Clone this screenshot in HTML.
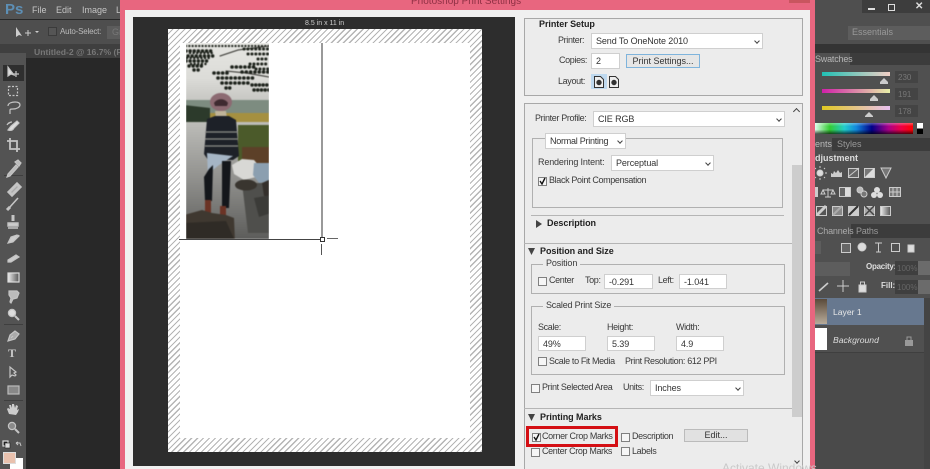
<!DOCTYPE html>
<html><head><meta charset="utf-8"><style>
html,body{margin:0;padding:0;background:#282828}
#r{position:relative;width:930px;height:469px;overflow:hidden;background:#282828;font-family:"Liberation Sans",sans-serif;font-size:9px;color:#222}
#r div,#r span{position:absolute;box-sizing:border-box;white-space:nowrap}
.t{font-size:9px;color:#3a3a3a;line-height:11px;letter-spacing:-.35px}
.b{font-weight:bold;color:#222;letter-spacing:-.05px}
.i{background:#fff;border:1px solid #cfcfcf;padding-left:4px;line-height:15px;color:#333;letter-spacing:-.1px}
.c{width:9px;height:9px;background:#f6f6f6;border:1px solid #808080}
.g{border:1px solid #b0b0b0}
.v{width:4px;height:4px;border-right:1.2px solid #444;border-bottom:1.2px solid #444;transform:rotate(45deg)}
.u{width:5px;height:5px;border-left:1.2px solid #444;border-top:1.2px solid #444;transform:rotate(45deg)}
.pt{color:#b5b5b5;font-size:9px;line-height:11px}
</style></head><body><div id="r">
<!-- PS chrome left -->
<div style="left:0;top:0;width:120px;height:19px;background:#535353"></div>
<div style="left:5px;top:2px;font:bold 15px 'Liberation Sans';color:#5d8fb5;line-height:15px">Ps</div>
<div class="pt" style="left:32px;top:5px;color:#c4c4c4">File</div>
<div class="pt" style="left:56px;top:5px;color:#c4c4c4">Edit</div>
<div class="pt" style="left:82px;top:5px;color:#c4c4c4">Image</div>
<div class="pt" style="left:116px;top:5px;color:#c4c4c4">L</div>
<div style="left:0;top:20px;width:120px;height:24px;background:#4e4e4e"></div>
<svg style="position:absolute;left:15px;top:26px" width="24" height="12"><path d="M1 1v10l3-2 3 1z" fill="#ccc"/><path d="M10 7h6M13 4v6" stroke="#ccc"/><path d="M20 5h4l-2 2z" fill="#ccc"/></svg>
<div style="left:48px;top:27px;width:9px;height:9px;background:#555;border:1px solid #3b3b3b"></div>
<div class="pt" style="left:60px;top:26px;color:#bbb;font-size:8px;letter-spacing:-.2px">Auto-Select:</div>
<div style="left:107px;top:26px;width:13px;height:13px;background:#5c5c5c"></div>
<div class="pt" style="left:112px;top:27px;color:#777">Gr</div>
<div style="left:0;top:44px;width:120px;height:14px;background:#3f3f3f"></div>
<div class="pt" style="left:34px;top:47px;color:#777;font-weight:bold;font-size:8.6px">Untitled-2 @ 16.7% (RGI</div>
<div style="left:0;top:53px;width:26px;height:416px;background:#535353"></div>
<div style="left:3px;top:65px;width:21px;height:16px;background:#2f2f2f"></div>
<div style="left:4px;top:175px;width:19px;height:1px;background:#3f3f3f"></div>
<div style="left:4px;top:324px;width:19px;height:1px;background:#3f3f3f"></div>
<div style="left:4px;top:400px;width:19px;height:1px;background:#3f3f3f"></div>
<svg style="position:absolute;left:0;top:60px" width="26" height="409" fill="none" stroke="#c4c4c4" stroke-width="1.2">
<path d="M8 7v9l3-2 3 1z" fill="#ddd"/><path d="M13 14h6M16 11v6"/>
<rect x="8.5" y="26.5" width="9" height="9" stroke-dasharray="2 1.5"/>
<path d="M8 46c0-3 4-4 7-4s5 1 5 3-3 4-7 4c-2 0-3 0-3 1s0 3 0 4"/>
<path d="M7 65c1-2 3-3 5-3M8 70c3 1 5 0 6-2l5-5-2-2-6 5z" fill="#ddd"/>
<path d="M10 78v11h10M7 81h10v11" stroke-width="1.8"/>
<path d="M8 114l8-9 2 2-8 9-3 1zM15 102l3-2 3 3-2 3z" fill="#bbb"/>
<path d="M9 132l8-8 3 3-8 8z" fill="#aaa" stroke-width="3"/>
<path d="M9 148l9-10" stroke-width="1.6"/><path d="M7 150l3-3" stroke-width="3"/>
<path d="M13 155v6" stroke-width="3"/><path d="M8 163h10v3H8zM8 168h10" fill="#ccc" stroke-width="1.4"/>
<path d="M8 183l5-1 6-6-2-1-6 2z" fill="#ccc"/><path d="M16 178l3-3"/>
<path d="M8 200l8-5 3 2-8 5H8z" fill="#ccc"/>
<defs><linearGradient id="gr"><stop offset="0" stop-color="#eee"/><stop offset="1" stop-color="#555"/></linearGradient></defs>
<rect x="8" y="213" width="11" height="9" fill="url(#gr)" stroke="#ddd"/>
<path d="M9 231h8l2 2-2 5-4 1-2 4-1-1 1-4-2-3z" fill="#bbb"/>
<circle cx="12" cy="253" r="3.6" fill="#ddd"/><path d="M15 256l4 4" stroke-width="2"/>
<path d="M8 281l2-6 5-4 4 3-4 5zM11 278l2-2" fill="#aaa"/>
<path d="M10 307v10l2-2 3 1 1-1-2-2 2-1z" fill="#555"/>
<rect x="8" y="326" width="11" height="8" fill="#888" stroke="#bbb"/>
<path d="M9 354l-2-5 1-1 2 1-1-4 2 0 1 3 0-4 2 0 1 4 1-3 2 1-1 4 2-1-1 3-2 3z" fill="#ccc" stroke="none"/>
<circle cx="12" cy="366" r="3.6" fill="#8a8a8a"/><path d="M15 369l4 4" stroke-width="2"/>
<rect x="3" y="381" width="5" height="5" fill="#222" stroke="#ddd"/><rect x="5" y="383" width="5" height="5" fill="#ddd" stroke="#222" stroke-width=".6"/>
<path d="M16 383h4l1 3M16 383l2-1M16 383l2 2" stroke-width="1"/>
</svg>
<div style="left:10px;top:458px;width:13px;height:11px;background:#fff"></div>
<div style="left:3px;top:452px;width:13px;height:12px;background:#e9c1ae;border:1px solid #ddd"></div>
<div style="left:8px;top:346px;font:bold 12px 'Liberation Serif';line-height:14px;color:#c8c8c8">T</div>
<!-- PS chrome right -->
<div style="left:815px;top:0;width:115px;height:469px;background:#505050"></div>
<div style="left:815px;top:0;width:115px;height:44px;background:#4f4f4f"></div>
<div style="left:862px;top:0;width:68px;height:13px;background:#3d3d3d"></div>
<div style="left:868px;top:8px;width:7px;height:2px;background:#ddd"></div>
<div style="left:888px;top:4px;width:7px;height:7px;border:1px solid #ddd"></div>
<div class="pt" style="left:915px;top:1px;color:#ddd;font-weight:bold;font-size:10px">✕</div>
<div style="left:848px;top:26px;width:82px;height:14px;background:#5d5d5d"></div>
<div class="pt" style="left:852px;top:27px;color:#999">Essentials</div>
<div style="left:815px;top:44px;width:115px;height:9px;background:#343434"></div>
<div style="left:815px;top:53px;width:115px;height:12px;background:#3c3c3c"></div>
<div style="left:815px;top:53px;width:35px;height:12px;background:#505050"></div>
<div class="pt" style="left:815px;top:54px;color:#b5b5b5;letter-spacing:-.2px">Swatches</div>
<div style="left:822px;top:72px;width:68px;height:4px;background:linear-gradient(90deg,#1fc0b4,#f2cfc5)"></div>
<div style="left:822px;top:89px;width:68px;height:4px;background:linear-gradient(90deg,#d01fa8,#e8f0a8)"></div>
<div style="left:822px;top:106px;width:68px;height:4px;background:linear-gradient(90deg,#e0c820,#e8c0f0)"></div>
<svg style="position:absolute;left:815px;top:76px" width="80" height="42" fill="#ccc"><path d="M65 6l4-4 4 4v2h-8zM55 23l4-4 4 4v2h-8zM50 40l4-4 4 4v1h-8z"/></svg>
<div style="left:895px;top:71px;width:23px;height:12px;background:#444"></div>
<div style="left:895px;top:88px;width:23px;height:12px;background:#444"></div>
<div style="left:895px;top:105px;width:23px;height:12px;background:#444"></div>
<div class="pt" style="left:898px;top:72px;color:#777;font-size:8px">230</div>
<div class="pt" style="left:898px;top:89px;color:#777;font-size:8px">191</div>
<div class="pt" style="left:898px;top:106px;color:#777;font-size:8px">178</div>
<div style="left:815px;top:123px;width:98px;height:11px;background:linear-gradient(90deg,#dfe,#3c3 15%,#2cc 30%,#18d 42%,#008 58%,#a08 75%,#e04 88%,#f00)"></div>
<div style="left:815px;top:123px;width:98px;height:11px;background:linear-gradient(#fff5,#fff0 30%,#0000 60%,#000a)"></div>
<div style="left:917px;top:123px;width:6px;height:11px;background:linear-gradient(#fff 50%,#000 50%)"></div>
<div style="left:815px;top:138px;width:115px;height:13px;background:#3c3c3c"></div>
<div style="left:815px;top:138px;width:17px;height:13px;background:#505050"></div>
<div class="pt" style="left:815px;top:139px;color:#bbb">ents</div>
<div class="pt" style="left:837px;top:139px;color:#999">Styles</div>
<div class="pt" style="left:815px;top:153px;color:#ddd;font-weight:bold">djustment</div>
<svg style="position:absolute;left:815px;top:165px" width="90" height="55" fill="#999" stroke="#ccc">
<circle cx="5" cy="8" r="3" fill="#ddd"/><path d="M5 1v2M5 13v2M-2 8h2M10 8h2M0 3l1 1M10 13l-1-1M10 3l-1 1M0 13l1-1"/>
<path d="M16 12V8l2 1 1-3 2 2 2-3 2 3 2-1v5z" fill="#ccc" stroke="none"/>
<rect x="33.500" y="3.500" width="10" height="9" fill="#666"/><path d="M33 12l11-9" />
<rect x="49.500" y="3.500" width="10" height="9" fill="#777"/><path d="M50 12l9-9L59 12z" fill="#ddd" stroke="none"/>
<path d="M66 3h10l-5 10z" fill="#777"/>
<rect x="0" y="22" width="3" height="10" fill="#ccc" stroke="none"/>
<path d="M13 23v9M8 25h10M8 25l-2 4h4zM18 25l-2 4h4zM10 32h6" fill="none"/>
<rect x="24.500" y="22.500" width="11" height="9" fill="#666"/><rect x="30" y="23" width="5" height="8" fill="#ddd" stroke="none"/>
<circle cx="45" cy="25" r="3" fill="#bbb"/><circle cx="49" cy="29" r="3" fill="#777"/>
<circle cx="62" cy="25" r="3" fill="#ddd" stroke="none"/><circle cx="59" cy="30" r="3" fill="#ddd" stroke="none"/><circle cx="65" cy="30" r="3" fill="#ddd" stroke="none"/>
<path d="M74.500 22.500h11v9h-11zM78 22v10M82 22v10M74 27h11" fill="#777"/>
<rect x="1.500" y="41.500" width="10" height="9" fill="#555"/><path d="M2 50l9-9" stroke-width="3" stroke="#ccc"/>
<rect x="17.500" y="41.500" width="10" height="9" fill="#888"/><path d="M18 50l9-9" stroke="#aaa" stroke-width="2"/>
<rect x="33.500" y="41.500" width="10" height="9" fill="#ccc"/><path d="M34 50l9-9" stroke="#333" stroke-width="2"/>
<rect x="49.500" y="41.500" width="10" height="9" fill="#aaa"/><path d="M50 41l9 9M59 41l-9 9" stroke="#444" stroke-width="1.5"/>
<rect x="65.500" y="41.500" width="10" height="9" fill="url(#gr)"/>
</svg>
<div style="left:815px;top:224px;width:115px;height:14px;background:#3c3c3c"></div>
<div style="left:815px;top:224px;width:36px;height:14px;background:#505050"></div>
<div class="pt" style="left:817px;top:226px;color:#aaa;letter-spacing:-.2px">Channels</div>
<div class="pt" style="left:856px;top:226px;color:#999;letter-spacing:-.2px">Paths</div>
<svg style="position:absolute;left:815px;top:240px" width="115" height="60" fill="#aaa" stroke="#ccc">
<rect x="26.500" y="3.500" width="9" height="9" fill="#666"/><circle cx="47" cy="7" r="4" fill="#ddd"/><path d="M60 3h7M63.500 3v9M61 12h5" fill="none"/><rect x="76.500" y="3.500" width="8" height="8" fill="none"/><rect x="93" y="5" width="6" height="7" fill="#ddd"/>
<path d="M4 52l9-8" stroke="#ccc" stroke-width="1.6" transform="translate(0,-1)"/><path d="M28 40v12M22 46h12"/><rect x="44" y="45" width="7" height="7" fill="#ddd"/><path d="M45.500 45v-3h4v3" fill="none"/>
</svg>
<div style="left:815px;top:241px;width:6px;height:13px;background:#5d5d5d"></div>
<div style="left:815px;top:262px;width:35px;height:14px;background:#5d5d5d"></div>
<div class="pt" style="left:866px;top:261px;color:#ddd;font-weight:bold;font-size:8px;letter-spacing:-.25px">Opacity:</div>
<div style="left:895px;top:261px;width:23px;height:14px;background:#3f3f3f"></div>
<div style="left:918px;top:261px;width:12px;height:14px;background:#6b6b6b"></div>
<div class="pt" style="left:897px;top:263px;color:#666;font-size:8px">100%</div>
<div class="pt" style="left:881px;top:280px;color:#ddd;font-weight:bold;font-size:8px">Fill:</div>
<div style="left:895px;top:280px;width:23px;height:14px;background:#3f3f3f"></div>
<div style="left:918px;top:280px;width:12px;height:14px;background:#6b6b6b"></div>
<div class="pt" style="left:897px;top:282px;color:#666;font-size:8px">100%</div>
<div style="left:815px;top:298px;width:109px;height:27px;background:#67788f"></div>
<div style="left:815px;top:299px;width:12px;height:25px;background:linear-gradient(#5a4a3a,#b8ab9a)"></div>
<div class="pt" style="left:833px;top:307px;color:#e8e8e8;font-size:8.6px">Layer 1</div>
<div style="left:815px;top:325px;width:109px;height:28px;background:#505050;border-bottom:1px solid #3f3f3f"></div>
<div style="left:815px;top:328px;width:12px;height:22px;background:#fff"></div>
<div class="pt" style="left:833px;top:335px;color:#ddd;font-style:italic;font-size:8.6px">Background</div>
<svg style="position:absolute;left:904px;top:335px" width="10" height="12"><rect x="1" y="5" width="8" height="6" fill="#999"/><path d="M3 5V2h4v3" fill="none" stroke="#999"/></svg>
<div style="left:815px;top:353px;width:109px;height:116px;background:#4a4a4a"></div>
<div style="left:924px;top:298px;width:6px;height:171px;background:#444"></div>
<!-- Dialog -->
<div style="left:120px;top:0;width:695px;height:469px;background:#e8667f"></div>
<div style="left:411px;top:-4px;font-size:10px;line-height:11px;color:#8f3044">Photoshop Print Settings</div>
<div style="left:789px;top:0;width:21px;height:3px;background:#c9555f"></div>
<div style="left:125px;top:10px;width:685px;height:459px;background:#f0f0f0"></div>
<div style="left:133px;top:17px;width:382px;height:449px;background:#2d2d2d"></div>
<div style="left:305px;top:20px;font-size:7px;line-height:8px;color:#ccc">8.5 in x 11 in</div>
<!-- Paper -->
<div style="left:168px;top:29px;width:314px;height:423px;background:repeating-linear-gradient(135deg,#fff 0,#fff 3px,#b4b4b4 3px,#b4b4b4 4.2px)"></div>
<div style="left:180px;top:43px;width:290px;height:395px;background:#fff"></div>
<!-- Photo -->
<div style="left:186px;top:43px;width:83px;height:196px;overflow:hidden">
<svg style="display:block;filter:blur(.55px)" width="83" height="196" viewBox="0 0 83 196">
<defs><linearGradient id="sky" x1="0" y1="0" x2="0" y2="1"><stop offset="0" stop-color="#e6e6e2"/><stop offset=".6" stop-color="#dcdcd8"/><stop offset="1" stop-color="#c4c4c0"/></linearGradient>
<linearGradient id="wat" x1="0" y1="0" x2="0" y2="1"><stop offset="0" stop-color="#bdbdb9"/><stop offset=".5" stop-color="#8e8e8b"/><stop offset="1" stop-color="#5a5a58"/></linearGradient></defs>
<rect x="-2" y="-2" width="87" height="62" fill="url(#sky)"/>
<rect x="-2" y="57" width="87" height="14" fill="#7d8c80"/>
<rect x="-2" y="70" width="87" height="10" fill="#a59040"/>
<path d="M-2 62l26 3v14H-2z" fill="#2c3a2b"/>
<rect x="-2" y="79" width="87" height="120" fill="url(#wat)"/>
<path d="M52 82h33v36H52z" fill="#4b5a2a"/>
<path d="M56 104h29v18H56z" fill="#5c4028"/>
<path d="M46 122l10-6 12 1 6 7-4 10-12 3-10-6z" fill="#d8d8d5"/>
<path d="M68 120h17v18l-12 2-6-8z" fill="#8b9fb0"/>
<path d="M56 140h29v50H62z" fill="#4f4f4c"/>
<ellipse cx="60" cy="142" rx="11" ry="5.500" fill="#39352f"/>
<path d="M76 140l9-4v17h-7z" fill="#34302c"/>
<path d="M68 155l17-3v18l-12 4z" fill="#3b3b38"/>
<g fill="none" stroke="#1c211a" stroke-linecap="round">
<path d="M0 3h83" stroke-width="2.200" stroke-dasharray=".1 3.200"/>
<path d="M0 8h28M2 13h26M0 18h24M3 23h14M8 27h6" stroke-width="3.400" stroke-dasharray=".1 4"/>
<path d="M4 10h22M1 15h24M5 21h16" stroke-width="2.400" stroke-dasharray=".1 3.500"/>
<path d="M34 13l18-6 31-4" stroke-width="1" stroke="#2b2b26"/>
<path d="M40 28l20 2 23 4" stroke-width="1" stroke="#2b2b26"/>
<path d="M58 6h25M62 11h21M72 16h11M64 21h19M70 26h13" stroke-width="3" stroke-dasharray=".1 3.800"/>
<path d="M28 30h16M32 35h36M36 40h28M46 24h24M56 29h27" stroke-width="3.600" stroke-dasharray=".1 4.200"/>
<path d="M66 42h17M68 47h15M40 45h6" stroke-width="3.400" stroke-dasharray=".1 3.600"/>
</g>
<ellipse cx="35" cy="59" rx="11" ry="9" fill="#8c6a72"/>
<path d="M28 60c3-5 11-5 14 0l-1 3H29z" fill="#3e2a30"/>
<path d="M29 68h11l1 8H30z" fill="#c0b59a"/>
<path d="M21 76l8-3h14l7 4 3 36-6 4H22l-4-6z" fill="#1d2128"/>
<path d="M19 89h33M19 96h33M19 103h33" stroke="#8d8d88" stroke-width="1.200"/>
<path d="M21 110l26 3-14 9-10 8-1 4z" fill="#a5b5c5"/>
<path d="M18 134l5-8 4-4-1 36h-7zM36 118h9l-2 47h-7z" fill="#14171b"/>
<path d="M19 157h6v13h-6zM34 163h6v12h-6z" fill="#6b3325"/>
<path d="M-2 172l18-5 10 3 14 2 8 3 1 24H-2z" fill="#3f3830"/>
<path d="M-2 180l42-2 9 20H-2z" fill="#2f2b26"/>
</svg></div>
<!-- Bounding box -->
<div style="left:179px;top:239px;width:143px;height:1px;background:#444"></div>
<div style="left:321px;top:43px;width:2px;height:196px;background:#999"></div>
<div style="left:320px;top:237px;width:5px;height:5px;background:#fff;border:1px solid #333"></div>
<div style="left:327px;top:238px;width:11px;height:1px;background:#666"></div>
<div style="left:321px;top:244px;width:1px;height:11px;background:#555"></div>
<!-- Right panels -->
<div style="left:515px;top:10px;width:295px;height:459px;background:#f0f0f0"></div>
<div style="left:524px;top:18px;width:279px;height:78px;background:#ececec;border:1px solid #a8a8a8"></div>
<div class="t b" style="left:539px;top:19px">Printer Setup</div>
<div class="t" style="left:558px;top:35px">Printer:</div>
<div class="i" style="left:591px;top:33px;width:172px;height:16px">Send To OneNote 2010</div>
<div class="v" style="left:755px;top:39px"></div>
<div class="t" style="left:559px;top:55px">Copies:</div>
<div class="i" style="left:591px;top:53px;width:29px;height:16px">2</div>
<div style="left:626px;top:54px;width:74px;height:14px;background:#e6e6e6;border:1px solid #7fb4dc;text-align:center;line-height:13px;color:#333">Print Settings...</div>
<div class="t" style="left:558px;top:76px">Layout:</div>
<div style="left:591px;top:74px;width:16px;height:15px;background:#bfd9ef"></div>
<svg style="position:absolute;left:593px;top:76px" width="28" height="12" fill="#eee" stroke="#333"><path d="M1.500.5h6l3 3v8h-9zM16.500.5h6l3 3v8h-9z"/><circle cx="6" cy="6.500" r="2.200" fill="#333"/><circle cx="21" cy="6.500" r="2.200" fill="#333"/></svg>
<div style="left:524px;top:103px;width:279px;height:366px;background:#ececec;border:1px solid #a8a8a8;border-bottom:none"></div>
<div style="left:792px;top:165px;width:10px;height:252px;background:#cdcdcd"></div>
<div class="u" style="left:794px;top:109px"></div>
<div class="t" style="left:535px;top:113px">Printer Profile:</div>
<div class="i" style="left:593px;top:111px;width:192px;height:16px">CIE RGB</div>
<div class="v" style="left:777px;top:117px"></div>
<div class="g" style="left:532px;top:138px;width:251px;height:70px"></div>
<div class="i" style="left:545px;top:133px;width:81px;height:16px;font-size:9px;line-height:15px;padding-left:4px;letter-spacing:-.25px">Normal Printing</div>
<div class="v" style="left:618px;top:139px"></div>
<div class="t" style="left:538px;top:157px;letter-spacing:-.15px">Rendering Intent:</div>
<div class="i" style="left:611px;top:155px;width:103px;height:16px">Perceptual</div>
<div class="v" style="left:706px;top:161px"></div>
<div class="c" style="left:538px;top:177px"></div>
<svg style="position:absolute;left:538px;top:177px" width="9" height="9"><path d="M2 4l2 3 3-6" fill="none" stroke="#111" stroke-width="1.400"/></svg>
<div class="t" style="left:549px;top:175px">Black Point Compensation</div>
<div style="left:531px;top:215px;width:253px;height:1px;background:#b5b5b5"></div>
<svg style="position:absolute;left:536px;top:220px" width="7" height="8"><path d="M0 0l6 4-6 4z" fill="#444"/></svg>
<div class="t b" style="left:547px;top:218px">Description</div>
<div style="left:524px;top:243px;width:268px;height:1px;background:#b5b5b5"></div>
<svg style="position:absolute;left:528px;top:248px" width="8" height="7"><path d="M0 0h7l-3.500 7z" fill="#444"/></svg>
<div class="t b" style="left:540px;top:246px">Position and Size</div>
<div class="g" style="left:531px;top:264px;width:254px;height:30px"></div>
<div class="t" style="left:543px;top:258px;background:#ececec;padding:0 3px;letter-spacing:-.1px">Position</div>
<div class="c" style="left:538px;top:277px"></div>
<div class="t" style="left:549px;top:275px">Center</div>
<div class="t" style="left:585px;top:275px">Top:</div>
<div class="i" style="left:604px;top:274px;width:49px;height:15px">-0.291</div>
<div class="t" style="left:658px;top:275px">Left:</div>
<div class="i" style="left:679px;top:274px;width:48px;height:15px">-1.041</div>
<div class="g" style="left:531px;top:306px;width:254px;height:69px"></div>
<div class="t" style="left:543px;top:300px;background:#ececec;padding:0 3px;letter-spacing:-.2px">Scaled Print Size</div>
<div class="t" style="left:538px;top:322px">Scale:</div>
<div class="t" style="left:607px;top:322px">Height:</div>
<div class="t" style="left:676px;top:322px">Width:</div>
<div class="i" style="left:538px;top:336px;width:48px;height:15px">49%</div>
<div class="i" style="left:607px;top:336px;width:48px;height:15px">5.39</div>
<div class="i" style="left:676px;top:336px;width:48px;height:15px">4.9</div>
<div class="c" style="left:538px;top:357px"></div>
<div class="t" style="left:549px;top:356px">Scale to Fit Media</div>
<div class="t" style="left:625px;top:356px">Print Resolution: 612 PPI</div>
<div class="c" style="left:531px;top:384px"></div>
<div class="t" style="left:542px;top:382px">Print Selected Area</div>
<div class="t" style="left:623px;top:382px">Units:</div>
<div class="i" style="left:650px;top:380px;width:94px;height:16px">Inches</div>
<div class="v" style="left:736px;top:386px"></div>
<div style="left:524px;top:408px;width:268px;height:1px;background:#b5b5b5"></div>
<svg style="position:absolute;left:528px;top:414px" width="8" height="7"><path d="M0 0h7l-3.500 7z" fill="#444"/></svg>
<div class="t b" style="left:540px;top:412px">Printing Marks</div>
<div style="left:526px;top:426px;width:92px;height:21px;border:3px solid #d40f14"></div>
<div class="c" style="left:532px;top:433px"></div>
<svg style="position:absolute;left:532px;top:433px" width="9" height="9"><path d="M2 4l2 3 3-6" fill="none" stroke="#111" stroke-width="1.400"/></svg>
<div class="t" style="left:542px;top:431px">Corner Crop Marks</div>
<div class="c" style="left:621px;top:433px"></div>
<div class="t" style="left:632px;top:431px">Description</div>
<div style="left:684px;top:429px;width:64px;height:13px;background:#e1e1e1;border:1px solid #bbb;text-align:center;line-height:11px;color:#333">Edit...</div>
<div class="c" style="left:531px;top:448px"></div>
<div class="t" style="left:542px;top:446px">Center Crop Marks</div>
<div class="c" style="left:621px;top:447px"></div>
<div class="t" style="left:632px;top:446px">Labels</div>
<div style="left:722px;top:461px;font-size:12px;line-height:14px;color:#c9c9c9">Activate Windows</div>
<div class="v" style="left:795px;top:459px"></div>
</div></body></html>
